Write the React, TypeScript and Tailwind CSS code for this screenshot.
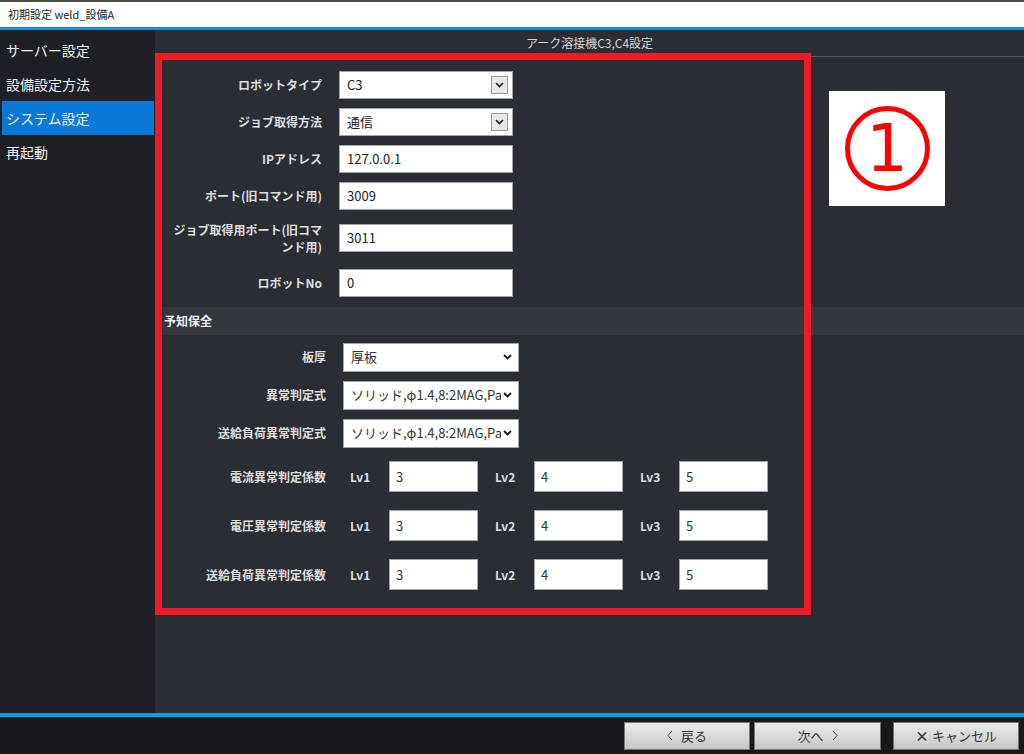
import React from "react"

const jp = "font-['Noto_Sans_CJK_JP','Noto_Sans',sans-serif]"

function DropButton() {
  return (
    <div className="ml-auto mr-[4px] flex h-[18px] w-[17px] items-center justify-center border border-[#9a9a9a] bg-[#e8e8e8]">
      <svg width="9" height="6" viewBox="0 0 9 6">
        <path d="M1 1l3.5 3.5L8 1" fill="none" stroke="#222" strokeWidth="1.6" />
      </svg>
    </div>
  )
}

function Chevron() {
  return (
    <svg width="9" height="6" viewBox="0 0 9 6" className="ml-auto mr-[6px] shrink-0">
      <path d="M1 1l3.5 3.5L8 1" fill="none" stroke="#111" strokeWidth="1.8" />
    </svg>
  )
}

function Row({ label, h, children }: { label: string; h: string; children: React.ReactNode }) {
  return (
    <div className={`flex items-center ${h}`}>
      <div className="flex w-[167px] justify-end">
        <span className="w-[156px] text-right text-[12px] font-bold leading-[17px] text-[#dedede]">{label}</span>
      </div>
      <div className="ml-[17px]">{children}</div>
    </div>
  )
}

function Field({ value, drop }: { value: string; drop?: boolean }) {
  return (
    <div className="flex h-[28px] w-[174px] items-center border border-[#a5a5a5] bg-white pl-[7px] text-[13px] text-[#222]">
      <span>{value}</span>
      {drop && <DropButton />}
    </div>
  )
}

function Select({ value }: { value: string }) {
  return (
    <div className="flex h-[29px] w-[176px] items-center border border-[#a5a5a5] bg-white pl-[7px] text-[13px] text-[#333]">
      <span className="w-[150px] overflow-hidden whitespace-nowrap">{value}</span>
      <Chevron />
    </div>
  )
}

function CoefRow({ label }: { label: string }) {
  const vals = ["3", "4", "5"]
  return (
    <div className="flex h-[49px] items-center">
      <span className="w-[171px] text-right text-[12px] font-bold text-[#dedede]">{label}</span>
      <div className="ml-[24px] flex items-center">
        {vals.map((v, i) => (
          <div key={v} className={`flex items-center ${i > 0 ? "ml-[17px]" : ""}`}>
            <span className="w-[39px] text-[12px] font-bold text-[#dedede]">Lv{i + 1}</span>
            <div className="flex h-[31px] w-[89px] items-center border border-[#a5a5a5] bg-white pl-[6px] text-[13px] text-[#333]">
              {v}
            </div>
          </div>
        ))}
      </div>
    </div>
  )
}

export default function App() {
  const menu = ["サーバー設定", "設備設定方法", "システム設定", "再起動"]
  return (
    <div className={`relative h-[754px] w-[1024px] overflow-hidden bg-[#17181b] ${jp}`}>
      {/* window title */}
      <div className="h-[2px] bg-[#4a4f48]" />
      <div className="flex h-[25px] items-center bg-white pl-[8px] text-[11px] text-[#222]">初期設定 weld_設備A</div>
      <div className="h-[3px] bg-[#1c8fd9]" />

      <div className="flex h-[683px]">
        {/* side menu */}
        <div className="w-[155px] bg-[#1e2025] pt-[3px]">
          {menu.map((m, i) => (
            <div
              key={m}
              className={`ml-[2px] mr-[1px] flex h-[34px] items-center pl-[4px] text-[14px] text-[#f2f2f2] ${
                i === 2 ? "bg-[#0a78d5]" : ""
              }`}
            >
              {m}
            </div>
          ))}
        </div>

        {/* content */}
        <div className="flex-1 bg-[#2a2d33]">
          <div className="flex h-[27px] items-center justify-center border-b border-[#56595f] text-[12px] text-[#d4d4d4]">
            アーク溶接機C3,C4設定
          </div>

          <div className="pt-[9px]">
            <Row label="ロボットタイプ" h="h-[37px]">
              <Field value="C3" drop />
            </Row>
            <Row label="ジョブ取得方法" h="h-[37px]">
              <Field value="通信" drop />
            </Row>
            <Row label="IPアドレス" h="h-[37px]">
              <Field value="127.0.0.1" />
            </Row>
            <Row label="ポート(旧コマンド用)" h="h-[37px]">
              <Field value="3009" />
            </Row>
            <Row label="ジョブ取得用ポート(旧コマンド用)" h="h-[47px]">
              <Field value="3011" />
            </Row>
            <Row label="ロボットNo" h="h-[43px]">
              <Field value="0" />
            </Row>
          </div>

          <div className="mt-[3px] flex h-[28px] items-center bg-[#33363d] pl-[9px] text-[12px] font-bold text-[#ececec]">
            予知保全
          </div>

          <div className="pt-[3px]">
            {[
              ["板厚", "厚板"],
              ["異常判定式", "ソリッド,φ1.4,8:2MAG,Pa"],
              ["送給負荷異常判定式", "ソリッド,φ1.4,8:2MAG,Pa"],
            ].map(([l, v]) => (
              <div key={l} className="flex h-[38px] items-center">
                <span className="w-[171px] text-right text-[12px] font-bold text-[#dedede]">{l}</span>
                <div className="ml-[17px]">
                  <Select value={v} />
                </div>
              </div>
            ))}
            <CoefRow label="電流異常判定係数" />
            <CoefRow label="電圧異常判定係数" />
            <CoefRow label="送給負荷異常判定係数" />
          </div>
        </div>
      </div>

      <div className="h-[4px] bg-[#0a9be2]" />

      {/* footer buttons */}
      <div className="flex h-[37px] items-center justify-end pr-[5px] text-[13px] text-[#333]">
        <button className="flex h-[28px] w-[126px] items-center justify-center gap-[8px] border border-[#767676] bg-gradient-to-b from-[#ececec] to-[#c6c6c6]">
          <svg width="6" height="11" viewBox="0 0 6 11">
            <path d="M5 1L1 5.5 5 10" fill="none" stroke="#444" strokeWidth="1" />
          </svg>
          戻る
        </button>
        <button className="ml-[4px] flex h-[28px] w-[127px] items-center justify-center gap-[8px] border border-[#767676] bg-gradient-to-b from-[#ececec] to-[#c6c6c6]">
          次へ
          <svg width="6" height="11" viewBox="0 0 6 11">
            <path d="M1 1l4 4.5L1 10" fill="none" stroke="#444" strokeWidth="1" />
          </svg>
        </button>
        <button className="ml-[12px] flex h-[28px] w-[126px] items-center justify-center gap-[3px] border border-[#767676] bg-gradient-to-b from-[#ececec] to-[#c6c6c6]">
          <span className="text-[14px] font-bold">×</span>キャンセル
        </button>
      </div>

      {/* annotation overlays */}
      <div className="absolute left-[155px] top-[53px] h-[562px] w-[656px] border-[7px] border-[#ed1c24]" />
      <div className="absolute left-[829px] top-[91px] flex h-[115px] w-[116px] items-center justify-center bg-white">
        <div className="flex h-[85px] w-[85px] items-center justify-center rounded-full border-[5px] border-[#ff0000]">
          <span className="font-['DejaVu_Sans',sans-serif] text-[66px] leading-none text-[#ff0000]">1</span>
        </div>
      </div>
    </div>
  )
}
